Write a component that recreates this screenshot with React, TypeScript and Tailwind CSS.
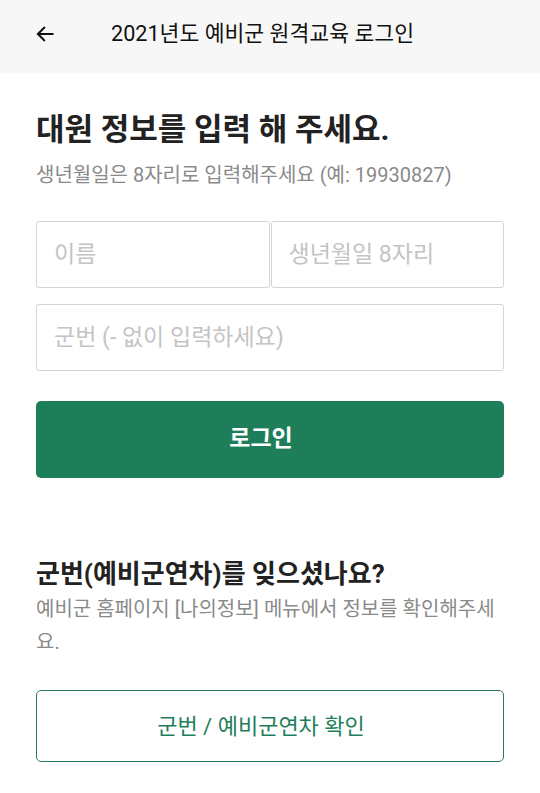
import React from 'react';

const font = { fontFamily: 'Roboto, "Noto Sans CJK KR", "Noto Sans", sans-serif' };

const App: React.FC = () => {
  return (
    <div className="min-h-[793px] w-[540px] bg-white text-[#222]" style={font}>
      <header className="h-[73px] bg-[#f7f7f7] flex items-center px-[34px] pb-[5px]">
        <button aria-label="back" className="w-[22px] h-[22px] flex items-center justify-center">
          <svg width="20" height="20" viewBox="0 0 24 24" fill="none" stroke="#111" strokeWidth="2.4" strokeLinecap="square">
            <path d="M21 12H4" />
            <path d="M11 4.5 3.5 12 11 19.5" />
          </svg>
        </button>
        <h1 className="ml-[55px] text-[21.6px] text-[#111] leading-none">2021년도 예비군 원격교육 로그인</h1>
      </header>

      <main className="px-[36px]">
        <h2 className="mt-[38px] text-[31px] font-bold leading-[38px] text-[#222]">대원 정보를 입력 해 주세요.</h2>
        <p className="mt-[13px] text-[20px] text-[#8a8a8a] leading-[26px]">생년월일은 8자리로 입력해주세요 (예: 19930827)</p>

        <div className="mt-[33px] flex gap-[1px]">
          <input
            placeholder="이름"
            className="w-1/2 min-w-0 h-[67px] border border-[#d4d4d4] rounded-[3px] px-[17px] text-[23px] placeholder:text-[#c4c4c4] outline-none"
          />
          <input
            placeholder="생년월일 8자리"
            className="w-1/2 min-w-0 h-[67px] border border-[#d4d4d4] rounded-[3px] px-[17px] text-[23px] placeholder:text-[#c4c4c4] outline-none"
          />
        </div>
        <input
          placeholder="군번 (- 없이 입력하세요)"
          className="mt-[16px] w-full h-[67px] border border-[#d4d4d4] rounded-[3px] px-[17px] text-[23px] placeholder:text-[#c4c4c4] outline-none"
        />

        <button className="mt-[30px] w-full h-[77px] rounded-[5px] bg-[#1e7e5a] text-white text-[23px] font-bold pr-[18px]">
          로그인
        </button>

        <h3 className="mt-[79px] text-[26px] font-bold leading-[34px] text-[#222]">군번(예비군연차)를 잊으셨나요?</h3>
        <p className="mt-[2px] text-[20px] leading-[33px] text-[#8a8a8a]">
          예비군 홈페이지 [나의정보] 메뉴에서 정보를 확인해주세요.
        </p>

        <button className="mt-[31px] w-full h-[72px] rounded-[5px] border border-[#2b7a5c] text-[#1e7e5a] text-[22px] pr-[18px]">
          군번 / 예비군연차 확인
        </button>
      </main>
    </div>
  );
};

export default App;
